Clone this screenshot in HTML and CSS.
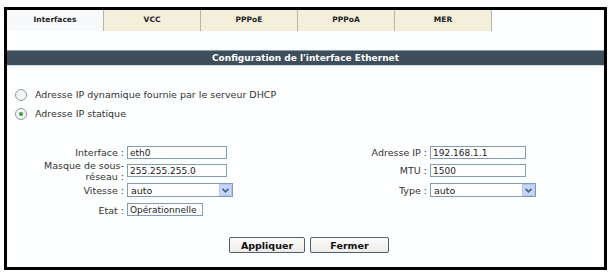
FILE: index.html
```html
<!DOCTYPE html>
<html lang="fr">
<head>
  <meta charset="UTF-8" />
  <title>Configuration de l'interface Ethernet</title>
  <link rel="stylesheet" href="styles.css">
</head>
<body>

<div id="frame">
  <div class="tabs">
    <div class="tab active">Interfaces</div>
    <div class="tab">VCC</div>
    <div class="tab">PPPoE</div>
    <div class="tab">PPPoA</div>
    <div class="tab">MER</div>
  </div>

  <div class="title-bar">Configuration de l'interface Ethernet</div>

  <div class="choices">
    <label class="choice"><span class="radio"></span> Adresse IP dynamique fournie par le serveur DHCP</label>
    <label class="choice"><span class="radio checked"></span> Adresse IP statique</label>
  </div>

  <div class="form-grid">
    <div class="lbl">Interface :</div>
    <div class="fld"><input class="txt" type="text" value="eth0"></div>
    <div class="lbl">Adresse IP :</div>
    <div class="fld"><input class="txt right" type="text" value="192.168.1.1"></div>

    <div class="lbl two-lines">Masque de sous-<br>réseau :</div>
    <div class="fld"><input class="txt" type="text" value="255.255.255.0"></div>
    <div class="lbl">MTU :</div>
    <div class="fld"><input class="txt right" type="text" value="1500"></div>

    <div class="lbl">Vitesse :</div>
    <div class="fld">
      <div class="select"><span>auto</span><span class="arrow"><svg width="7" height="5" viewBox="0 0 7 5"><path d="M0.5 0.8 L3.5 3.8 L6.5 0.8" fill="none" stroke="#4d6185" stroke-width="1.6"/></svg></span></div>
    </div>
    <div class="lbl">Type :</div>
    <div class="fld">
      <div class="select"><span>auto</span><span class="arrow"><svg width="7" height="5" viewBox="0 0 7 5"><path d="M0.5 0.8 L3.5 3.8 L6.5 0.8" fill="none" stroke="#4d6185" stroke-width="1.6"/></svg></span></div>
    </div>

    <div class="lbl last">Etat :</div>
    <div class="fld last"><input class="txt short" type="text" value="Opérationnelle"></div>
  </div>

  <div class="buttons">
    <button class="btn btn-apply">Appliquer</button>
    <button class="btn btn-close">Fermer</button>
  </div>
</div>

</body>
</html>
```

FILE: styles.css
```css
body {
  margin: 0;
  background: #fff;
  font-family: "DejaVu Sans", Verdana, sans-serif;
  font-size: 9.5px;
  color: #333;
}
#frame {
  margin: 7px 3px 4px 4px;
  height: 257px;
  border: 3px solid #000;
  background: #fdfefe;
  display: flex;
  flex-direction: column;
}
.tabs {
  display: flex;
  height: 21px;
}
.tab {
  width: 97px;
  height: 21px;
  line-height: 19px;
  text-align: center;
  font-weight: bold;
  font-size: 7.5px;
  color: #222;
  background: #f4efdb;
  border-right: 1px solid #b9b6a8;
  box-sizing: border-box;
}
.tab.active {
  background: #f7f9fb;
}
.title-bar {
  margin-top: 19px;
  height: 14px;
  line-height: 14px;
  background: #3e4f5b;
  border-top: 1px solid #8e9ea8;
  border-bottom: 1px solid #cbdde8;
  color: #fff;
  font-weight: bold;
  font-size: 9px;
  text-align: center;
}
.choices {
  margin-top: 19px;
  padding-left: 8px;
}
.choice {
  display: flex;
  align-items: center;
  gap: 8px;
  height: 19px;
}
.radio {
  width: 10px;
  height: 10px;
  border: 1px solid #8f9ca6;
  border-radius: 50%;
  background: #f3f4f4;
  display: flex;
  align-items: center;
  justify-content: center;
}
.radio.checked::after {
  content: "";
  width: 4px;
  height: 4px;
  border-radius: 50%;
  background: #39a039;
}
.form-grid {
  margin-top: 23px;
  display: grid;
  grid-template-columns: 117px 173px 124px 1fr;
  grid-template-rows: 13px 17px 16px 15px;
  column-gap: 3px;
  row-gap: 3px;
  align-items: center;
}
.lbl {
  text-align: right;
  line-height: 11px;
}
.last {
  align-self: end;
}
.txt {
  display: block;
  width: 100px;
  height: 13px;
  box-sizing: border-box;
  border: 1px solid #7f9db9;
  padding: 0 2px;
  font-family: inherit;
  font-size: 9px;
  color: #222;
  background: #fff;
}
.txt.right {
  width: 96px;
}
.txt.short {
  width: 76px;
}
.select {
  width: 106px;
  height: 14px;
  box-sizing: border-box;
  border: 1px solid #7f9db9;
  background: #fff;
  display: flex;
  align-items: center;
  justify-content: space-between;
  padding-left: 3px;
  color: #222;
}
.arrow {
  width: 13px;
  height: 12px;
  background: #c6d6f7;
  border: 1px solid #b3c5ee;
  box-sizing: border-box;
  border-radius: 1px;
  display: flex;
  align-items: center;
  justify-content: center;
}
.buttons {
  margin-top: 21px;
  display: flex;
  justify-content: center;
  gap: 5px;
  padding-left: 7px;
}
.btn {
  height: 16px;
  padding: 0;
  border: 1px solid #4f5f72;
  border-radius: 2px;
  background: linear-gradient(#fdfdfd, #ecebe6);
  font-family: inherit;
  font-size: 9.5px;
  font-weight: bold;
  color: #111;
}
.btn-apply { width: 76px; }
.btn-close { width: 79px; }
```
